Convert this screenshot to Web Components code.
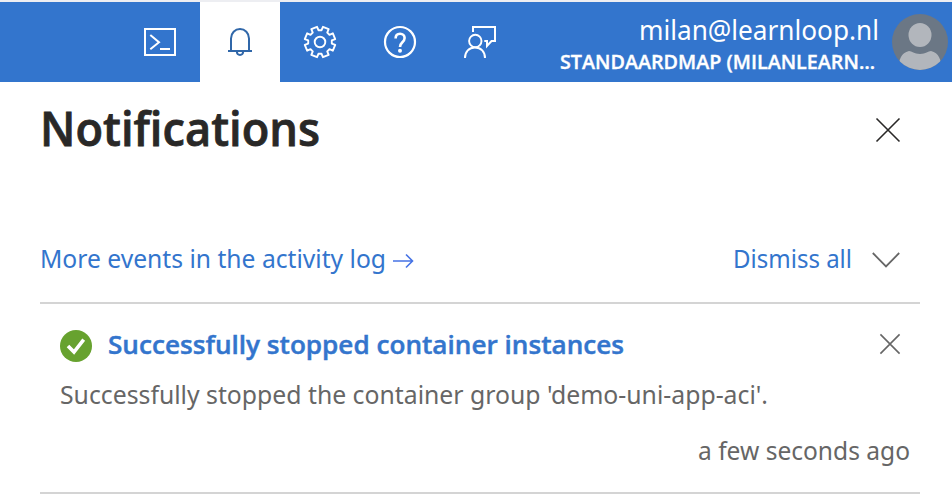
<!DOCTYPE html>
<html lang="en">
<head>
<meta charset="utf-8">
<title>Notifications</title>
<style>
html,body{margin:0;background:#fff}
body{width:952px;height:498px;overflow:hidden;font-family:"Noto Sans","Open Sans",sans-serif}
</style>
</head>
<body>
<portal-page></portal-page>
<script>
const define = (name, html, init) => customElements.define(name, class extends HTMLElement {
  constructor() {
    super();
    const t = document.createElement('template');
    t.innerHTML = html;
    this.attachShadow({mode: 'open'}).append(t.content.cloneNode(true));
  }
  connectedCallback() { if (init) init(this); }
});

// A single line of text condensed or widened to the measure in its "width" attribute.
define('fit-text', `<style>
:host{display:block;white-space:nowrap;flex:none;font-variant-ligatures:none}
span{display:inline-block;transform-origin:0 50%}
</style><span><slot></slot></span>`, el => {
  const w = +el.getAttribute('width');
  const s = el.shadowRoot.querySelector('span');
  el.style.width = w + 'px';
  s.style.transform = `scaleX(${w / s.getBoundingClientRect().width})`;
});

// Gear outline: eight teeth around the centre of the cell.
const gearPoints = [];
for (let i = 0; i < 8; i++) {
  for (const [r, a] of [[11.900, -15], [15.500, -11.500], [15.500, 11.500], [11.900, 15]]) {
    const q = (i * 45 + 22.500 + a) * Math.PI / 180;
    gearPoints.push((30 + r * Math.cos(q)).toFixed(2) + ' ' + (42 + r * Math.sin(q)).toFixed(2));
  }
}

const icons = {
  shell: '<path d="M15 29h30v26H15z" stroke-width="2"/><path d="M20.300 35l8.700 7.200-8.700 7" stroke-width="2"/><path d="M30 49h10" stroke-width="2"/>',
  bell: '<path d="M21 51V38.500a9 9.500 0 0 1 18 0V51M18 51h24M26.800 51.500c.3 4.600 6.100 4.600 6.400 0" stroke-width="2"/>',
  gear: `<path d="M${gearPoints.join('L')}Z" stroke-width="1.900" stroke-linejoin="round"/><circle cx="30" cy="42" r="5.300" stroke-width="1.900"/>`,
  help: '<circle cx="30" cy="42" r="15" stroke-width="2.200"/><path d="M25.600 38.400c0-3 1.900-4.700 4.500-4.700s4.500 1.700 4.500 4.300c0 4.400-4.600 4.200-4.600 9" stroke-width="2.600"/><circle cx="30" cy="50.700" r="2" fill="currentColor" stroke="none"/>',
  feedback: '<circle cx="25.300" cy="41" r="6.200" stroke-width="1.900"/><path d="M15 58c0-6.200 4-10.500 10-10.500S35 51.800 35 58" stroke-width="2"/><path d="M23 32V27h22v14h-3.500L37 46v-5h-2.700" stroke-width="2"/>'
};
define('bar-button', `<style>
:host{display:block;width:80px;height:80px;flex:none;color:#fff}
:host([active]){background:#fff;color:#3067a9}
svg{display:block;fill:none;stroke:currentColor}
</style><svg width="80" height="80" viewBox="-10 2 80 80"></svg>`,
el => { el.shadowRoot.querySelector('svg').innerHTML = icons[el.getAttribute('icon')]; });

define('user-account', `<style>
:host{display:flex;justify-content:flex-end;gap:13px;padding-right:4px;color:#fff}
div{display:flex;flex-direction:column;align-items:flex-end;padding-top:9px}
.mail{font-size:27.500px;line-height:38px}
.dir{font:600 19.500px/28px "Open Sans","Noto Sans",sans-serif;-webkit-text-stroke:.35px;margin:-1px 4px 0 0}
svg{display:block;margin-top:12px}
</style><div><fit-text class="mail" width="240">milan@learnloop.nl</fit-text><fit-text class="dir" width="315">STANDAARDMAP (MILANLEARN…</fit-text></div>
<svg width="56" height="56"><clipPath id="c"><circle cx="28" cy="28" r="28"/></clipPath><g clip-path="url(#c)"><path d="M0 0h56v56H0z" fill="#6b7785"/><path d="M6 56C7 45 9 39 17 37c3 0 5 3 11 3s8-3 11-3c8 2 10 8 11 19z" fill="#b2b6bc"/><ellipse cx="28" cy="21" rx="11.500" ry="12" fill="#b2b6bc"/></g></svg>`);

define('top-bar', `<style>
:host{display:flex;height:80px;border-top:2px solid #edeef2;background:#3375cd;padding-left:120px}
user-account{flex:1}
</style><bar-button icon="shell"></bar-button><bar-button icon="bell" active></bar-button><bar-button icon="gear"></bar-button><bar-button icon="help"></bar-button><bar-button icon="feedback"></bar-button><user-account></user-account>`);

define('close-icon', `<style>:host{display:block;flex:none}svg{display:block;overflow:visible}</style>
<svg viewBox="0 0 24 24" fill="none" stroke="currentColor"><path d="M.5.5l23 23M23.500.5l-23 23"/></svg>`,
el => {
  const n = +el.getAttribute('size'), s = el.shadowRoot.querySelector('svg');
  s.setAttribute('width', n); s.setAttribute('height', n);
  s.setAttribute('stroke-width', 1.600 * 24 / n);
});

define('notification-item', `<style>
:host{display:block;height:188px;border-bottom:2px solid #d4d4d4;color:#666;font-size:25.500px;line-height:40px}
header{display:flex;align-items:center;height:40px;padding:20px 20px 0}
.ok{margin:3px 16px 0 0;display:block}
.title{font:600 25.500px/40px "Open Sans","Noto Sans",sans-serif;-webkit-text-stroke:.45px;color:#3375cd}
close-icon{margin-left:auto}
.body{padding:10px 20px 0}
.time{display:flex;justify-content:flex-end;padding:16px 10px 0}
</style><header><svg class="ok" width="32" height="32"><circle cx="16" cy="16" r="16" fill="#67a22f"/><path d="M8 16l6 6 9.700-12.300" fill="none" stroke="#fff" stroke-width="3.600"/></svg>
<fit-text class="title" width="516"><slot name="title"></slot></fit-text><close-icon size="20"></close-icon></header>
<div class="body"><fit-text width="708"><slot name="body"></slot></fit-text></div>
<div class="time"><fit-text width="212"><slot name="time"></slot></fit-text></div>`);

define('notifications-panel', `<style>
:host{display:block;padding:0 32px 0 40px}
.head{display:flex;justify-content:space-between;align-items:center;height:96px;padding-right:20px;color:#292827}
h1{margin:-4px 0 0;font:600 47px/64px "Open Sans","Noto Sans",sans-serif;-webkit-text-stroke:.8px}
.actions{display:flex;align-items:center;height:40px;padding:60px 20px 24px 0;border-bottom:2px solid #d4d4d4;color:#3375cd;font-size:25.500px;line-height:40px}
.arrow{margin:5px auto 0 7px}
.chev{margin:3px 0 0 20px}
svg{display:block;fill:none}
</style>
<div class="head"><h1><fit-text width="280">Notifications</fit-text></h1><close-icon size="24"></close-icon></div>
<div class="actions"><fit-text width="346">More events in the activity log</fit-text>
<svg class="arrow" width="21" height="16" stroke="#4673e5" stroke-width="1.600"><path d="M0 8h19M13 1.500L19.500 8 13 14.500"/></svg>
<fit-text width="119">Dismiss all</fit-text>
<svg class="chev" width="28" height="16" stroke="#666" stroke-width="1.800"><path d="M.8 1L14 14.500 27.200 1"/></svg></div>
<notification-item><span slot="title">Successfully stopped container instances</span><span slot="body">Successfully stopped the container group 'demo-uni-app-aci'.</span><span slot="time">a few seconds ago</span></notification-item>`);

define('portal-page', `<style>:host{display:block;width:952px;height:498px}</style><top-bar></top-bar><notifications-panel></notifications-panel>`);
</script>
</body>
</html>
